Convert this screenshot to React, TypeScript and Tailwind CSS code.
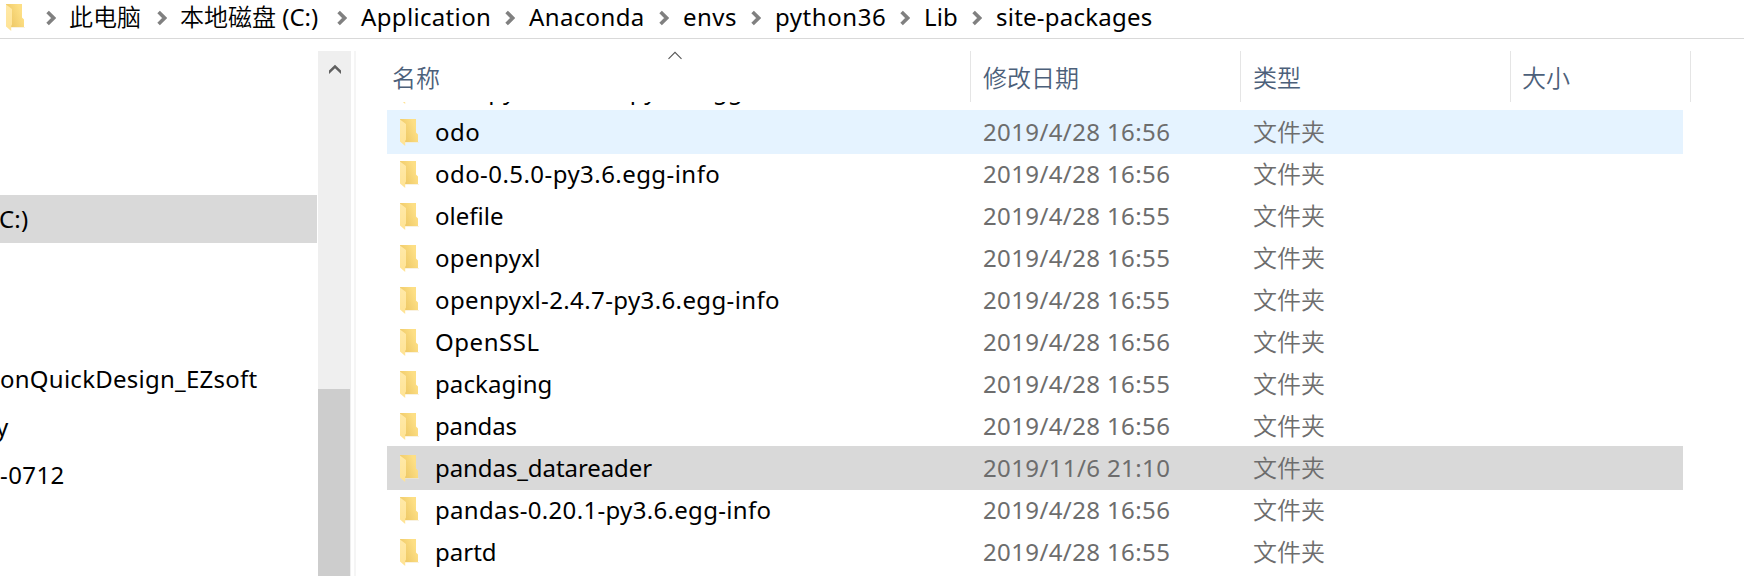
type Crumb = { cjk?: string; label?: string; width: string; tracking: string };
type Entry = { name: string; tracking: string; date?: string; type?: string; state?: "hover" | "selected" };

const crumbs: Crumb[] = [
  { cjk: "此电脑", width: "w-[111px]", tracking: "tracking-normal" },
  { cjk: "本地磁盘", label: " (C:)", width: "w-[180px]", tracking: "tracking-[0px]" },
  { label: "Application", width: "w-[168px]", tracking: "tracking-[0.34px]" },
  { label: "Anaconda", width: "w-[154px]", tracking: "tracking-[0.36px]" },
  { label: "envs", width: "w-[92px]", tracking: "tracking-[0.45px]" },
  { label: "python36", width: "w-[149px]", tracking: "tracking-[0.55px]" },
  { label: "Lib", width: "w-[72px]", tracking: "tracking-[0.15px]" },
  { label: "site-packages", width: "w-[180px]", tracking: "tracking-[0.24px]" },
];

const FOLDER = "文件夹";

const entries: Entry[] = [
  { name: "numpydoc-0.7.0-py3.6.egg-info", tracking: "tracking-[0.38px]" },
  { name: "odo", tracking: "tracking-[0.51px]", date: "2019/4/28 16:56", type: FOLDER, state: "hover" },
  { name: "odo-0.5.0-py3.6.egg-info", tracking: "tracking-[0.44px]", date: "2019/4/28 16:56", type: FOLDER },
  { name: "olefile", tracking: "tracking-[0.02px]", date: "2019/4/28 16:55", type: FOLDER },
  { name: "openpyxl", tracking: "tracking-[0.35px]", date: "2019/4/28 16:55", type: FOLDER },
  { name: "openpyxl-2.4.7-py3.6.egg-info", tracking: "tracking-[0.38px]", date: "2019/4/28 16:55", type: FOLDER },
  { name: "OpenSSL", tracking: "tracking-[0.55px]", date: "2019/4/28 16:56", type: FOLDER },
  { name: "packaging", tracking: "tracking-[0.1px]", date: "2019/4/28 16:55", type: FOLDER },
  { name: "pandas", tracking: "tracking-[-0.15px]", date: "2019/4/28 16:56", type: FOLDER },
  { name: "pandas_datareader", tracking: "tracking-[-0.08px]", date: "2019/11/6 21:10", type: FOLDER, state: "selected" },
  { name: "pandas-0.20.1-py3.6.egg-info", tracking: "tracking-[0.32px]", date: "2019/4/28 16:56", type: FOLDER },
  { name: "partd", tracking: "tracking-[0px]", date: "2019/4/28 16:55", type: FOLDER },
];

function FolderIcon() {
  return (
    <svg className="block h-7 w-5 shrink-0" viewBox="0 0 20 28">
      <defs>
        <linearGradient id="folder-back" x1="0" y1="0.9" x2="1" y2="0.4">
          <stop offset="0.25" stopColor="#efca68" />
          <stop offset="0.9" stopColor="#fddf85" />
        </linearGradient>
        <linearGradient id="folder-flap" x1="0" y1="0" x2="0" y2="1">
          <stop offset="0" stopColor="#ffe9a8" />
          <stop offset="1" stopColor="#ffe394" />
        </linearGradient>
      </defs>
      <path d="M5 23h14v.6H5z" fill="#f6eacb" />
      <path d="M0 0h16v13.6l2 2V23H4L0 1z" fill="url(#folder-back)" />
      <path d="M0 .5 6 5v15.5L5.2 22v5L0 22.6z" fill="url(#folder-flap)" />
    </svg>
  );
}

function CrumbArrow() {
  return (
    <svg className="block h-4 w-[10px] shrink-0" viewBox="0 0 10 16">
      <path d="M1.6 2 7.6 8l-6 6" fill="none" stroke="#808080" strokeWidth="3.6" />
    </svg>
  );
}

function Breadcrumb() {
  return (
    <header className="flex h-[39px] shrink-0 items-start border-b border-[#d9d9d9]">
      <div className="w-[39.500px] shrink-0 pl-1.5 pt-1">
        <FolderIcon />
      </div>
      <nav className="flex">
        {crumbs.map((c) => (
          <div key={c.width} className={`flex h-9 shrink-0 items-center ${c.width}`}>
            <div className={`shrink-0 pl-[6px] ${c.cjk ? "w-[29.500px]" : "w-[30.500px]"}`}>
              <CrumbArrow />
            </div>
            <span className={`-mt-[2px] whitespace-pre ${c.tracking}`}>
              {c.cjk && <span className="font-[350]">{c.cjk}</span>}
              {c.label}
            </span>
          </div>
        ))}
      </nav>
    </header>
  );
}

function Sidebar() {
  return (
    <aside className="flex w-[317px] shrink-0 flex-col overflow-hidden pt-[156px]">
      <div className="flex h-12 items-center bg-[#d9d9d9]">
        <span className="-ml-[1px] tracking-[0.2px]">C:)</span>
      </div>
      <div className="mt-28 flex h-12 items-center tracking-[0.25px]">onQuickDesign_EZsoft</div>
      <div className="flex h-12 items-center">
        <span className="-ml-[4px]">y</span>
      </div>
      <div className="flex h-12 items-center tracking-[0.4px]">-0712</div>
    </aside>
  );
}

function Scrollbar() {
  return (
    <div className="ml-px mt-3 flex w-[33px] shrink-0 flex-col bg-[#efefef]">
      <div className="flex h-[338px] justify-center pt-[13px]">
        <svg className="h-[11px] w-3" viewBox="0 0 12 11">
          <path d="M0 10V6.6L6 .8l6 5.8V10L6 4.2z" fill="#606060" />
        </svg>
      </div>
      <div className="w-8 flex-1 bg-[#cdcdcd]" />
    </div>
  );
}

function ColumnHeader() {
  return (
    <div className="flex h-[51px] shrink-0 font-[350] leading-[53px] text-[#4c607a]">
      <div className="flex w-[584px] justify-between border-r border-[#e5e5e5] pl-[5px]">
        <span>名称</span>
        <svg className="mr-[288px] h-[9px] w-[14px]" viewBox="0 0 14 9">
          <path d="M.5 7.8 7 1.3l6.500 6.500" fill="none" stroke="#555" strokeWidth="1.1" />
        </svg>
      </div>
      <div className="w-[270px] border-r border-[#e5e5e5] pl-3">修改日期</div>
      <div className="w-[270px] border-r border-[#e5e5e5] pl-3">类型</div>
      <div className="w-[180px] border-r border-[#e5e5e5] pl-[11px]">大小</div>
    </div>
  );
}

function Row({ entry }: { entry: Entry }) {
  const tone =
    entry.state === "hover" ? "bg-[#e5f3ff]" : entry.state === "selected" ? "bg-[#d9d9d9]" : "";
  return (
    <div className={`-my-px flex h-11 w-[1296px] shrink-0 items-center pl-[13px] ${tone}`}>
      <div className="h-[26px] w-[35px] shrink-0">
        <FolderIcon />
      </div>
      <span className={`w-[548px] shrink-0 whitespace-pre text-black ${entry.tracking}`}>{entry.name}</span>
      {entry.date && <span className="w-[270px] shrink-0 tracking-[0.38px] text-[#6d6d6d]">{entry.date}</span>}
      {entry.type && <span className="font-[350] text-[#6d6d6d]">{entry.type}</span>}
    </div>
  );
}

export default function App() {
  return (
    <div className="flex h-[576px] w-[1744px] flex-col overflow-hidden bg-white font-['Noto_Sans','Noto_Sans_CJK_SC',sans-serif] text-[24px] leading-9 text-black">
      <Breadcrumb />
      <main className="flex min-h-0 flex-1">
        <Sidebar />
        <Scrollbar />
        <section className="ml-[3px] mt-3 flex min-w-0 flex-1 flex-col border-l-2 border-[#f5f5f5] pl-[31px]">
          <ColumnHeader />
          <div className="flex min-h-0 flex-1 flex-col overflow-hidden">
            <div className="-mt-[34px] flex flex-col pt-px">
              {entries.map((e) => (
                <Row key={e.name} entry={e} />
              ))}
            </div>
          </div>
        </section>
      </main>
    </div>
  );
}
